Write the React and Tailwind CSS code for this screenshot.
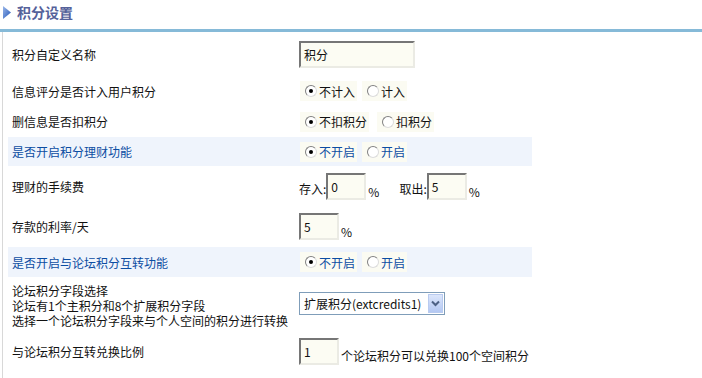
import React from "react";

const Radio = ({ checked, label, blue }) => (
  <span className="inline-flex items-center h-[20px] pl-[5px] pr-[2px] bg-[#fbfbf2]">
    <span className="w-[12px] h-[12px] rounded-full border border-t-[#808080] border-l-[#808080] border-b-[#dcdcdc] border-r-[#dcdcdc] bg-white flex items-center justify-center">
      {checked && <span className="w-[4px] h-[4px] rounded-full bg-black" />}
    </span>
    <span className={`ml-[2px] ${blue ? "text-[#0c4da2]" : "text-[#111]"}`}>{label}</span>
  </span>
);

const Input = ({ value, w }) => (
  <span
    className={`${w} h-[27px] inline-flex items-center pl-[3px] bg-[#fcfcf3] border-2 border-t-[#767676] border-l-[#767676] border-b-[#ebebe4] border-r-[#ebebe4] text-[#111]`}
  >
    {value}
  </span>
);

const Row = ({ h, hl, label, children }) => (
  <div className={`flex w-[524px] ${h} ${hl ? "bg-[#eff4fc]" : ""}`}>
    <div
      className={`w-[291px] pl-[4px] flex items-center ${hl ? "text-[#0c4da2]" : "text-[#111]"}`}
    >
      {label}
    </div>
    <div className="flex-1 flex items-center">{children}</div>
  </div>
);

export default function App() {
  return (
    <div
      className="w-[702px] h-[378px] bg-white overflow-hidden text-[12px] leading-[15px]"
      style={{ fontFamily: '"Noto Sans CJK SC", "Noto Sans", sans-serif' }}
    >
      <div className="h-[29px] flex items-start pt-[3px] pl-[3px]">
        <svg width="8" height="13" viewBox="0 0 8 13" className="mt-[3px]">
          <defs>
            <linearGradient id="tri" x1="0" y1="0" x2="1" y2="1">
              <stop offset="0" stopColor="#9bb8ea" />
              <stop offset="1" stopColor="#2356b8" />
            </linearGradient>
          </defs>
          <polygon points="0,0 8,6.5 0,13" fill="url(#tri)" />
        </svg>
        <span className="ml-[6px] text-[14px] leading-[18px] font-bold text-[#55619a]">积分设置</span>
      </div>
      <div className="h-[3px] bg-[#86bad8]" />
      <div className="ml-[2px] border-l border-[#d8d8d8] pl-[5px] h-[346px]">
        <Row h="h-[44px]" label="积分自定义名称">
          <Input value="积分" w="w-[116px]" />
        </Row>
        <Row h="h-[30px]" label="信息评分是否计入用户积分">
          <span className="flex gap-[5px] pl-[1px]">
            <Radio checked label="不计入" />
            <Radio label="计入" />
          </span>
        </Row>
        <Row h="h-[31px]" label="删信息是否扣积分">
          <span className="flex gap-[8px] pl-[1px]">
            <Radio checked label="不扣积分" />
            <Radio label="扣积分" />
          </span>
        </Row>
        <Row h="h-[29px]" hl label="是否开启积分理财功能">
          <span className="flex gap-[5px] pl-[1px]">
            <Radio checked blue label="不开启" />
            <Radio blue label="开启" />
          </span>
        </Row>
        <Row h="h-[40px]" label="理财的手续费">
          <span className="flex items-center text-[#111] pt-[1px]">
            <span className="mt-[3px]">存入:</span>
            <Input value="0" w="w-[40px]" />
            <span className="ml-[2px] mt-[10px]">%</span>
            <span className="ml-[20px] mt-[3px]">取出:</span>
            <Input value="5" w="w-[40px]" />
            <span className="ml-[2px] mt-[10px]">%</span>
          </span>
        </Row>
        <Row h="h-[41px]" label="存款的利率/天">
          <span className="flex items-end text-[#111]">
            <Input value="5" w="w-[40px]" />
            <span className="ml-[2px] mb-[1px]">%</span>
          </span>
        </Row>
        <Row h="h-[30px]" hl label="是否开启与论坛积分互转功能">
          <span className="flex gap-[5px] pl-[1px]">
            <Radio checked blue label="不开启" />
            <Radio blue label="开启" />
          </span>
        </Row>
        <Row
          h="h-[56px]"
          label={
            <div className="flex flex-col">
              <span>论坛积分字段选择</span>
              <span>论坛有1个主积分和8个扩展积分字段</span>
              <span>选择一个论坛积分字段来与个人空间的积分进行转换</span>
            </div>
          }
        >
          <span className="mb-[3px] w-[146px] h-[23px] flex items-center border border-[#7f9db9] bg-white text-[#111]">
            <span className="flex-1 pl-[4px]">扩展积分(extcredits1)</span>
            <span className="w-[15px] h-[19px] mr-[1px] flex items-center justify-center bg-gradient-to-b from-[#dce6fb] to-[#b4c8f3] border border-[#b9cbf0]">
              <svg width="9" height="7" viewBox="0 0 9 7">
                <polyline points="1,1.5 4.5,5 8,1.5" fill="none" stroke="#4d6185" strokeWidth="2" />
              </svg>
            </span>
          </span>
        </Row>
        <Row h="h-[37px]" label="与论坛积分互转兑换比例">
          <span className="flex items-end text-[#111]">
            <Input value="1" w="w-[40px]" />
            <span className="ml-[2px] mb-[2px]">个论坛积分可以兑换100个空间积分</span>
          </span>
        </Row>
      </div>
    </div>
  );
}
